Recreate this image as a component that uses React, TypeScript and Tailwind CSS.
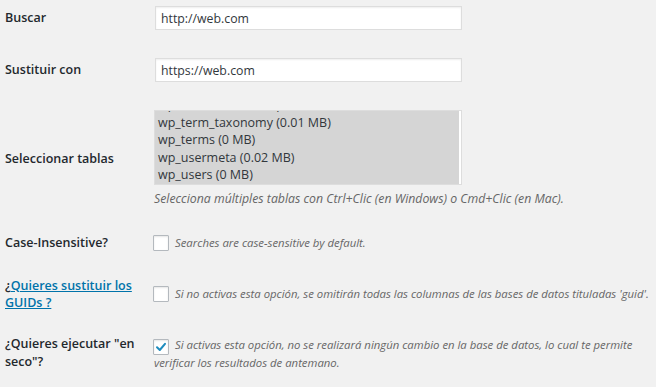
import React from 'react';

const tables = [
  'wp_term_relationships (0.01 MB)',
  'wp_term_taxonomy (0.01 MB)',
  'wp_terms (0 MB)',
  'wp_usermeta (0.02 MB)',
  'wp_users (0 MB)',
];

const Checkbox: React.FC<{ checked?: boolean }> = ({ checked }) => (
  <span className="-ml-[1px] mr-[6px] inline-flex h-[16px] w-[16px] shrink-0 items-center justify-center rounded-[1px] border border-[#b4b9be] bg-white shadow-[inset_0_1px_2px_rgba(0,0,0,0.1)]">
    {checked && (
      <svg width="12" height="12" viewBox="0 0 12 12">
        <path d="M2 6.2 L4.8 9 L10 2.8" fill="none" stroke="#1e8cbe" strokeWidth="2" strokeLinecap="round" strokeLinejoin="round" />
      </svg>
    )}
  </span>
);

const Label: React.FC<{ children: React.ReactNode }> = ({ children }) => (
  <div className="w-[154px] shrink-0 pl-[5px] pr-[14px] text-[12.5px] font-semibold leading-[17.5px] text-[#23282d]">
    {children}
  </div>
);

export default function App() {
  return (
    <div className="h-[387px] w-[656px] overflow-hidden bg-[#f1f1f1] font-['Open_Sans',sans-serif]">
      <div className="flex h-[36px] items-center">
        <Label>Buscar</Label>
        <input
          readOnly
          value="http://web.com"
          className="ml-[1px] h-[24px] w-[307px] border border-[#ddd] bg-white px-[5px] text-[12.3px] text-[#32373c] shadow-[inset_0_1px_2px_rgba(0,0,0,0.07)] outline-none"
        />
      </div>

      <div className="mt-[16px] flex h-[36px] items-center">
        <Label>Sustituir con</Label>
        <input
          readOnly
          value="https://web.com"
          className="ml-[1px] h-[24px] w-[307px] border border-[#ddd] bg-white px-[5px] text-[12.3px] text-[#32373c] shadow-[inset_0_1px_2px_rgba(0,0,0,0.07)] outline-none"
        />
      </div>

      <div className="mt-[22px] flex items-center">
        <Label>Seleccionar tablas</Label>
        <div>
          <div className="h-[75px] w-[308px] overflow-hidden border border-[#ddd] bg-white pr-[2px]">
            <div className="-mt-[15px] bg-[#d5d5d5]">
              {tables.map((t) => (
                <div key={t} className="pl-[3px] text-[12.5px] leading-[17.6px] text-[#32373c]">
                  {t}
                </div>
              ))}
            </div>
          </div>
          <p className="mt-[5px] text-[12.3px] italic leading-[17px] text-[#666]">
            Selecciona múltiples tablas con Ctrl+Clic (en Windows) o Cmd+Clic (en Mac).
          </p>
        </div>
      </div>

      <div className="mt-[20px] flex h-[32px] items-center">
        <Label>Case-Insensitive?</Label>
        <Checkbox />
        <span className="text-[11.35px] italic text-[#666]">Searches are case-sensitive by default.</span>
      </div>

      <div className="mt-[17px] flex h-[36px] items-center">
        <Label>
          ¿<a href="#" className="text-[#0073aa] underline">Quieres sustituir los GUIDs ?</a>
        </Label>
        <Checkbox />
        <span className="whitespace-nowrap text-[11.35px] italic text-[#666]">
          Si no activas esta opción, se omitirán todas las columnas de las bases de datos tituladas 'guid'.
        </span>
      </div>

      <div className="mt-[23px] flex items-start">
        <div className="w-[154px] shrink-0 pl-[5px] pr-[14px] text-[12.5px] font-semibold leading-[18px] text-[#23282d]">
          ¿Quieres ejecutar "en seco"?
        </div>
        <p className="w-[485px] text-[11.35px] italic leading-[18px] text-[#666]">
          <span className="relative top-[4px] inline-flex align-baseline">
            <Checkbox checked />
          </span>
          Si activas esta opción, no se realizará ningún cambio en la base de datos, lo cual te permite verificar los resultados de antemano.
        </p>
      </div>
    </div>
  );
}
